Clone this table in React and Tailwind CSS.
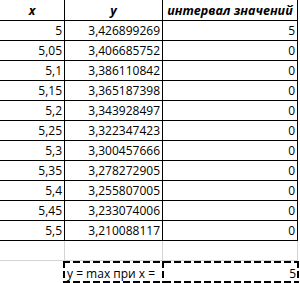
const ROWS = [
  ["5", "3,426899269", "5"],
  ["5,05", "3,406685752", "0"],
  ["5,1", "3,386110842", "0"],
  ["5,15", "3,365187398", "0"],
  ["5,2", "3,343928497", "0"],
  ["5,25", "3,322347423", "0"],
  ["5,3", "3,300457666", "0"],
  ["5,35", "3,278272905", "0"],
  ["5,4", "3,255807005", "0"],
  ["5,45", "3,233074006", "0"],
  ["5,5", "3,210088117", "0"],
];

const COLS = "grid grid-cols-[65px_98px_135px]";

// excel-style long dashes (7 on / 3 off), drawn as background strips
const DASH_BOX =
  "[background:repeating-linear-gradient(90deg,#000_0_7px,transparent_7px_10px)_top/100%_2px_no-repeat,repeating-linear-gradient(90deg,#000_0_7px,transparent_7px_10px)_bottom/100%_2px_no-repeat,repeating-linear-gradient(180deg,#000_0_7px,transparent_7px_10px)_left/2px_100%_no-repeat,repeating-linear-gradient(180deg,#000_0_7px,transparent_7px_10px)_right/2px_100%_no-repeat]";

// same box, sharing its left edge with the cell before it
const DASH_OPEN_LEFT =
  "[background:repeating-linear-gradient(90deg,#000_0_7px,transparent_7px_10px)_top/100%_2px_no-repeat,repeating-linear-gradient(90deg,#000_0_7px,transparent_7px_10px)_bottom/100%_2px_no-repeat,repeating-linear-gradient(180deg,#000_0_7px,transparent_7px_10px)_right/2px_100%_no-repeat]";

function Cell({ children }) {
  return (
    <div className="flex h-[20px] items-end justify-end border-r border-b border-black pr-[2px] pb-[2px] leading-[15px]">
      {children}
    </div>
  );
}

function Head({ children }) {
  return (
    <div className="flex h-[21px] items-end justify-center border-r border-b border-black pb-[2px] text-[12.5px] leading-[15px] font-bold italic">
      {children}
    </div>
  );
}

export default function App() {
  return (
    <div className="h-[283px] w-[300px] overflow-hidden bg-white font-['Open_Sans',sans-serif] text-[12px] text-black">
      <div className={COLS}>
        <Head>x</Head>
        <Head>y</Head>
        <Head>интервал значений</Head>

        {ROWS.map(([x, y, v]) => (
          <div key={x} className="contents">
            <Cell>{x}</Cell>
            <Cell>{y}</Cell>
            <Cell>{v}</Cell>
          </div>
        ))}

        {/* empty row, plain gridlines */}
        <div className="h-[20px] border-r border-b border-[#d4d4d4]" />
        <div className="h-[20px] border-r border-b border-[#d4d4d4]" />
        <div className="h-[20px] border-r border-b border-[#d4d4d4]" />

        {/* result row */}
        <div className="h-[22px]" />
        <div className={`-ml-[2px] flex h-[22px] w-[101px] items-end pb-[2px] pl-[4px] leading-[15px] ${DASH_BOX}`}>
          y = max при x =
        </div>
        <div className={`ml-[1px] flex h-[22px] w-[135px] items-end justify-end pb-[2px] pr-[3px] leading-[15px] ${DASH_OPEN_LEFT}`}>
          5
        </div>
      </div>
    </div>
  );
}
